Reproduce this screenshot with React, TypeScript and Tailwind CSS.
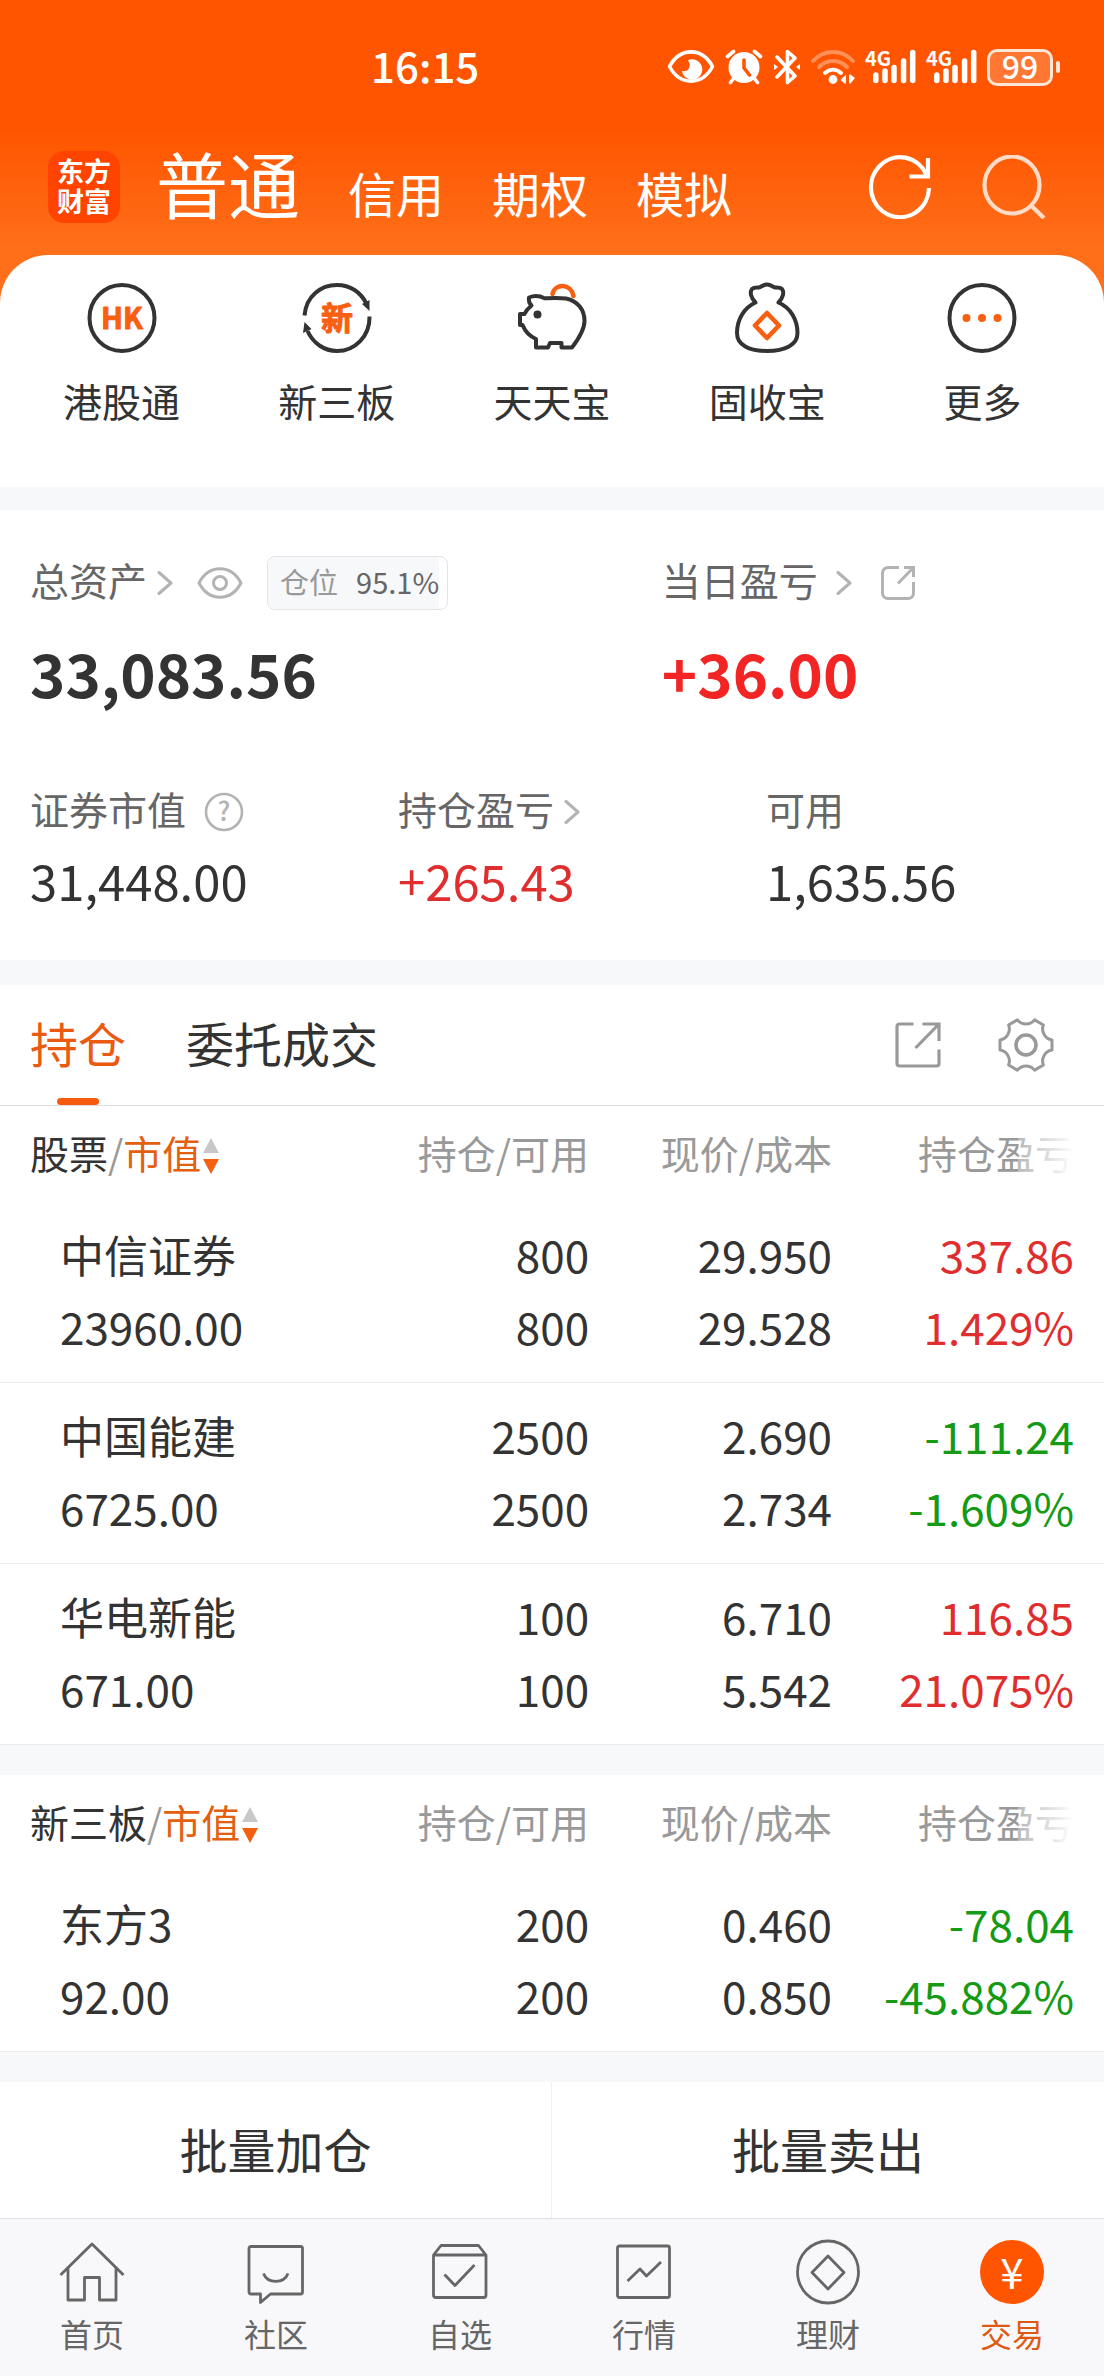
import type { ReactNode } from "react";

type Holding = {
  name: string;
  value: string;
  amount: string;
  available: string;
  price: string;
  cost: string;
  profit: string;
  rate: string;
};

const stocks: Holding[] = [
  { name: "中信证券", value: "23960.00", amount: "800", available: "800", price: "29.950", cost: "29.528", profit: "337.86", rate: "1.429%" },
  { name: "中国能建", value: "6725.00", amount: "2500", available: "2500", price: "2.690", cost: "2.734", profit: "-111.24", rate: "-1.609%" },
  { name: "华电新能", value: "671.00", amount: "100", available: "100", price: "6.710", cost: "5.542", profit: "116.85", rate: "21.075%" },
];

const thirdBoard: Holding[] = [
  { name: "东方3", value: "92.00", amount: "200", available: "200", price: "0.460", cost: "0.850", profit: "-78.04", rate: "-45.882%" },
];

/* 状态栏图标 */
function SignalIcon() {
  return (
    <svg className="h-9 w-[52px] overflow-visible" viewBox="0 0 52 36" fill="none" stroke="#fff" strokeWidth="5.5" strokeLinecap="round">
      <text x="0" y="17" fill="#fff" stroke="none" fontSize="20" fontWeight="700">4G</text>
      <path d="M10.8 26v5.5M20 22v9.5M29 18.500v13M38.600 12v19.500M47.700 3.500v28" />
    </svg>
  );
}

function StatusBar() {
  return (
    <div className="flex h-[134px] items-center justify-between pl-[371px] pr-11">
      <span className="pb-1 text-[42px] leading-[48px] font-medium">16:15</span>
      <div className="flex items-center gap-[9px]">
        <svg className="h-[34px] w-12" viewBox="0 0 48 34" fill="none" stroke="#fff" strokeWidth="3.600">
          <path d="M2.500 16.500C13-3 35-3 45.500 16.500 35 36 13 36 2.500 16.500Z" strokeLinejoin="round" />
          <path d="M21 10.200a10.200 10.200 0 1 1-6 10.500c2 1.200 5 .8 6.500-1.600 1.800-2.800 1.700-6-.5-8.900Z" fill="#fff" stroke="none" />
        </svg>
        <svg className="h-9 w-10" viewBox="0 0 40 36" fill="none" stroke="#fff" strokeWidth="3.600" strokeLinecap="round">
          <circle cx="20" cy="18.500" r="15.500" fill="#fff" stroke="none" />
          <path d="M3.500 7.500l6-5M30.500 2.500l6 5M9.500 29.500l-3 4M30.500 29.500l3 4" />
          <path d="M20 11v8l5.500 7" stroke="#ff5500" strokeLinejoin="round" />
        </svg>
        <svg className="h-9 w-7" viewBox="0 0 28 36" fill="none" stroke="#fff" strokeWidth="3.600" strokeLinecap="round" strokeLinejoin="round">
          <path d="M4 8l18 19-7.500 6.500V2.500L22 9 4 28" />
          <path d="M1 15v6l4-3ZM27 15v6l-4-3Z" fill="#fff" stroke="none" />
        </svg>
        <svg className="h-9 w-[46px]" viewBox="0 0 46 36" fill="none" stroke="#fff" strokeWidth="4" strokeLinecap="round">
          <path d="M3 12C14 0 32 0 43 12" opacity=".35" />
          <path d="M9 18c8-8 20-8 28 0" opacity=".35" />
          <path d="M15 24c5-4.500 11-4.500 16 0" />
          <circle cx="23" cy="30.500" r="4.400" fill="#fff" stroke="none" />
          <path d="M36 25.500v9h-1.500L30.500 31ZM39 25.500h1.500l4.500 3.500-4.500 5.500H39Z" fill="#fff" stroke="none" />
        </svg>
        <SignalIcon />
        <SignalIcon />
        <div className="flex items-center gap-[3px]">
          <span className="flex h-[37px] w-[66px] items-center justify-center rounded-[10px] border-[3px] border-[#ffe6d5] bg-white/20 pb-1 text-[32px] leading-8 font-medium">
            99
          </span>
          <span className="h-3 w-1 rounded-sm bg-[#ffe6d5]"></span>
        </div>
      </div>
    </div>
  );
}

function TopNav() {
  return (
    <div className="flex h-[106px] items-center pr-[58px] pl-12">
      <div className="flex h-[72px] w-[72px] items-center justify-center rounded-2xl bg-[#ff4400] pb-0.5 text-[27px] leading-[30px] font-bold">
        <p>
          东方
          <br />
          财富
        </p>
      </div>
      <nav className="ml-9 flex flex-1 items-baseline gap-12 text-5xl leading-[72px]">
        <a href="#normal" className="text-[72px] leading-[72px]">普通</a>
        <a href="#credit">信用</a>
        <a href="#option">期权</a>
        <a href="#demo">模拟</a>
      </nav>
      <button type="button" aria-label="刷新">
        <svg className="size-16" viewBox="0 0 64 64" fill="none" stroke="#fff" strokeWidth="4.200">
          <path d="M61 33A29 30 0 1 1 58.500 20" />
          <path d="M60 3v18.500H41.500" />
        </svg>
      </button>
      <button type="button" aria-label="搜索" className="ml-[50px]">
        <svg className="size-16" viewBox="0 0 64 64" fill="none" stroke="#ffdcc8" strokeWidth="4.200">
          <ellipse cx="30" cy="30" rx="27.500" ry="28.500" />
          <path d="M48.500 50L62 63" />
        </svg>
      </button>
    </div>
  );
}

function Shortcut({ label, children }: { label: string; children: ReactNode }) {
  return (
    <a href="#shortcut" className="flex flex-1 flex-col items-center gap-[22px]">
      <svg className="size-[72px]" viewBox="0 0 72 72" fill="none" stroke="#333" strokeWidth="4" strokeLinejoin="round">
        {children}
      </svg>
      <span className="text-[39px] leading-[48px]">{label}</span>
    </a>
  );
}

function Shortcuts() {
  return (
    <section className="flex rounded-t-[48px] bg-white px-3.5 pt-[27px] pb-[63px] text-[#333]">
      <Shortcut label="港股通">
        <ellipse cx="36" cy="36" rx="32.500" ry="33" />
        <text x="36" y="47" textAnchor="middle" fontSize="29" fontWeight="700" fill="#f95f10" stroke="#f95f10" strokeWidth="1">HK</text>
      </Shortcut>
      <Shortcut label="新三板">
        <path d="M3.500 33.500C5 14 20 3 36 3c13 0 24 7 29.500 19" />
        <path d="M68.500 34.500C69 54 54 69 36 69 23 69 12 61 6.500 49" />
        <path d="M61 22l7.500-4v11ZM10.500 47L2 51l1.500-11Z" fill="#333" stroke="none" />
        <text x="36" y="47.500" textAnchor="middle" fontSize="32" fontWeight="700" fill="#f95f10" stroke="#f95f10" strokeWidth="1">新</text>
      </Shortcut>
      <Shortcut label="天天宝">
        <path d="M36.500 12C39 1 55 1 57.500 14" stroke="#f95f10" strokeWidth="4.500" strokeLinecap="round" />
        <path d="M13 15.500c5-2 11-1.500 15.500.8C35 16 42 15.500 50 16.500 62 19 68.500 28 68.500 39c0 9-6 18-12.500 26.500H45.500V61H34l-2 4.500H20V57C13 54 9 49 6.500 43H4V32h4.500c1.500-3.500 4-6 7-8.500-2-2-3-5-2.500-8Z" />
        <circle cx="21.500" cy="32.500" r="4" fill="#333" stroke="none" />
      </Shortcut>
      <Shortcut label="固收宝">
        <path d="M24.500 20.500C20 16 18.500 10 21 7c2-2 5-1.500 7-1.500C30 5 32 2.500 36 2.500S42 5 44 5.500c2 0 5-.5 7 1.500 2.500 3 1 9-3.500 13.500C60 26 66.500 38 66.500 51 66.500 63 54 69 36 69S6 63 6 51c0-13 6.500-25 18.500-30.500Z" />
        <path d="M36 31L48 43.500 36 56 24 43.500Z" stroke="#f95f10" strokeWidth="4.600" />
      </Shortcut>
      <Shortcut label="更多">
        <ellipse cx="36" cy="36" rx="32.500" ry="33" />
        <g fill="#f95f10" stroke="none">
          <circle cx="20.500" cy="36" r="4" />
          <circle cx="36" cy="36" r="4" />
          <circle cx="51.500" cy="36" r="4" />
        </g>
      </Shortcut>
    </section>
  );
}

function Chevron() {
  return (
    <svg className="h-6 w-4" viewBox="0 0 16 24" fill="none" stroke="#b3b3b3" strokeWidth="3" strokeLinecap="round" strokeLinejoin="round">
      <path d="M2 1.500L14 12 2 22.500" />
    </svg>
  );
}

function Assets() {
  return (
    <section className="bg-white pt-[46px] pb-[50px]">
      <div className="grid grid-cols-[4fr_3fr]">
        <div className="pl-[30px]">
          <div className="flex h-[54px] items-center">
            <a href="#assets" className="flex items-center gap-2.5">
              <span className="pb-2 text-[39px] leading-[48px] text-[#666]">总资产</span>
              <Chevron />
            </a>
            <button type="button" aria-label="隐藏金额" className="mx-6">
              <svg className="h-8 w-[46px]" viewBox="0 0 46 32" fill="none" stroke="#b3b3b3" strokeWidth="3">
                <path d="M2 16C12-3 34-3 44 16 34 35 12 35 2 16Z" strokeLinejoin="round" />
                <circle cx="23" cy="16" r="6.500" />
              </svg>
            </button>
            <span className="rounded-lg border border-[#e3e4e8] pr-2">
              <span className="flex h-[52px] items-center gap-[18px] rounded-l-lg bg-[#f7f8fa] pl-3 pb-1 text-[29px] leading-9">
                <span className="text-[#999]">仓位</span>
                <span className="text-[#666]">95.1%</span>
              </span>
            </span>
          </div>
          <p className="mt-[26px] text-[60px] leading-[72px] font-bold text-[#333]">33,083.56</p>
        </div>
        <div className="pl-[31px]">
          <div className="flex h-[54px] items-center">
            <a href="#today" className="flex items-center gap-[18px]">
              <span className="pb-2 text-[39px] leading-[48px] text-[#666]">当日盈亏</span>
              <Chevron />
            </a>
            <button type="button" aria-label="分享" className="ml-7">
              <svg className="size-9" viewBox="0 0 36 36" fill="none" stroke="#b3b3b3" strokeWidth="3">
                <path d="M19 2.500H8A5.500 5.500 0 0 0 2.500 8v20A5.500 5.500 0 0 0 8 33.500h20a5.500 5.500 0 0 0 5.500-5.500V17" />
                <path d="M24 2.500h9.500V12M33 3L18 18.500" />
              </svg>
            </button>
          </div>
          <p className="mt-[26px] text-[60px] leading-[72px] font-bold text-[#f22424]">+36.00</p>
        </div>
      </div>

      <div className="mt-20 grid grid-cols-3 text-[49px] leading-[60px] text-[#333]">
        <div className="pl-[30px]">
          <div className="flex h-12 items-center gap-[18px]">
            <span className="pb-2 text-[39px] leading-[48px] text-[#666]">证券市值</span>
            <button type="button" aria-label="说明">
              <svg className="size-10" viewBox="0 0 40 40" fill="none" stroke="#b3b3b3" strokeWidth="2.600">
                <circle cx="20" cy="20" r="18" />
                <text x="20" y="29" textAnchor="middle" fontSize="26" fontWeight="500" fill="#b3b3b3" stroke="none">?</text>
              </svg>
            </button>
          </div>
          <p className="mt-3.5">31,448.00</p>
        </div>
        <div className="pl-[30px]">
          <a href="#profit" className="flex h-12 items-center gap-2.5">
            <span className="pb-2 text-[39px] leading-[48px] text-[#666]">持仓盈亏</span>
            <Chevron />
          </a>
          <p className="mt-3.5 text-[#e02d2d]">+265.43</p>
        </div>
        <div className="pl-[30px]">
          <div className="flex h-12 items-center">
            <span className="pb-2 text-[39px] leading-[48px] text-[#666]">可用</span>
          </div>
          <p className="mt-3.5">1,635.56</p>
        </div>
      </div>
    </section>
  );
}

function PositionTabs() {
  return (
    <div className="flex h-[121px] items-center border-b border-[#dedede] bg-white px-[30px] text-5xl">
      <a href="#position" className="relative flex h-full items-center pb-1.5 text-[#ea5a10]">
        持仓
        <span className="absolute bottom-0 left-1/2 h-[7px] w-[42px] -translate-x-1/2 rounded-full bg-[#f55a0f]"></span>
      </a>
      <a href="#orders" className="ml-[60px] flex-1 pb-1.5 text-[#333]">委托成交</a>
      <button type="button" aria-label="分享持仓">
        <svg className="size-12" viewBox="0 0 48 48" fill="none" stroke="#999" strokeWidth="3.200">
          <path d="M19.500 3H5.500A2.500 2.500 0 0 0 3 5.500v37A2.500 2.500 0 0 0 5.500 45h37a2.500 2.500 0 0 0 2.500-2.500V28.500" />
          <path d="M28.500 3H45v17M44.500 3.500l-23 23.500" />
        </svg>
      </button>
      <button type="button" aria-label="设置" className="ml-14 mr-5">
        <svg className="size-14" viewBox="0 0 56 56" fill="none" stroke="#999" strokeWidth="3" strokeLinejoin="round">
          <path d="M54 33.100A11 11 0 0 0 45.400 48L36.600 53.100A11 11 0 0 0 19.400 53.100L10.600 48A11 11 0 0 0 2 33.100V22.900A11 11 0 0 0 10.600 8L19.400 2.900A11 11 0 0 0 36.600 2.900L45.400 8A11 11 0 0 0 54 22.900Z" />
          <circle cx="28" cy="28" r="10" strokeWidth="3.500" />
        </svg>
      </button>
    </div>
  );
}

function HoldingRow({ item }: { item: Holding }) {
  const color = item.profit.startsWith("-") ? "text-[#149a14]" : "text-[#e02d2d]";
  return (
    <tr className="border-b border-[#ebebeb] text-right">
      <td className="pt-4 pb-5 pl-[60px] text-left">
        <div>{item.name}</div>
        <div>{item.value}</div>
      </td>
      <td className="pt-4 pb-5">
        <div>{item.amount}</div>
        <div>{item.available}</div>
      </td>
      <td className="pt-4 pb-5">
        <div>{item.price}</div>
        <div>{item.cost}</div>
      </td>
      <td className={`pt-4 pb-5 pr-[30px] ${color}`}>
        <div>{item.profit}</div>
        <div>{item.rate}</div>
      </td>
    </tr>
  );
}

function HoldingTable({ title, items }: { title: string; items: Holding[] }) {
  return (
    <table className="w-full table-fixed bg-white text-[44px] leading-[72px] text-[#333]">
      <thead>
        <tr className="h-24 text-right text-[39px] leading-[48px] text-[#999]">
          <th className="pb-1 pl-[30px] text-left font-normal">
            <button type="button" className="flex items-center">
              <span className="text-[#333]">{title}</span>/<span className="text-[#e2600f]">市值</span>
              <svg className="mt-2 ml-0.5 h-9 w-4" viewBox="0 0 16 36">
                <path d="M8 0l8 15H0Z" fill="#c8c8c8" />
                <path d="M8 36l8-15H0Z" fill="#f55f12" />
              </svg>
            </button>
          </th>
          <th className="w-[22%] pb-1 font-normal">持仓/可用</th>
          <th className="w-[22%] pb-1 font-normal">现价/成本</th>
          <th className="relative w-[272px] pr-[30px] pb-1 font-normal">
            持仓盈亏
            <span className="absolute inset-y-0 right-[30px] w-14 bg-linear-to-r from-white/30 to-white"></span>
          </th>
        </tr>
      </thead>
      <tbody>
        {items.map((item) => (
          <HoldingRow key={item.name} item={item} />
        ))}
      </tbody>
    </table>
  );
}

function NavItem({ label, active, children }: { label: string; active?: boolean; children: ReactNode }) {
  return (
    <a
      href="#nav"
      className={`flex flex-1 flex-col items-center gap-2.5 text-[32px] leading-9 ${active ? "text-[#dd5a14]" : "text-[#666]"}`}
    >
      <svg className="size-[66px]" viewBox="0 0 66 66" fill="none" stroke="#666" strokeWidth="2.800" strokeLinejoin="round">
        {children}
      </svg>
      <span>{label}</span>
    </a>
  );
}

function BottomNav() {
  return (
    <nav className="flex border-t border-[#e0e0e2] bg-[#f8f8fa] pt-5 pb-5">
      <NavItem label="首页">
        <path d="M1.500 36L33 5l31.500 31" />
        <path d="M9 29v32h16.500V38.500h15V61H57V29" />
      </NavItem>
      <NavItem label="社区">
        <path d="M8 7.500h49.500a2 2 0 0 1 2 2V53a2 2 0 0 1-2 2H27.500l-10 8.500V55H8a2 2 0 0 1-2-2V9.500a2 2 0 0 1 2-2Z" />
        <path d="M20.500 34.500c4 10.500 20.500 10.500 24.500 0" />
      </NavItem>
      <NavItem label="自选">
        <path d="M6.500 16L14 6.500h37.500L59 16v40a2.500 2.500 0 0 1-2.500 2.500H9A2.500 2.500 0 0 1 6.500 56ZM6.500 16H59" />
        <path d="M17.500 35.500l10.500 11 19.500-20.500" />
      </NavItem>
      <NavItem label="行情">
        <rect x="6.500" y="7" width="52" height="51.500" rx="2" />
        <path d="M16.500 42l12.500-12 6.500 7L50 23" />
      </NavItem>
      <NavItem label="理财">
        <ellipse cx="33" cy="33" rx="30.500" ry="31" />
        <path d="M33 17l16 16.500L33 50 17 33.500Z" />
      </NavItem>
      <NavItem label="交易" active>
        <circle cx="33" cy="33" r="32" fill="#ff5500" stroke="none" />
        <text x="33" y="50" textAnchor="middle" fontSize="42" fill="#fff" stroke="none">¥</text>
      </NavItem>
    </nav>
  );
}

export default function App() {
  return (
    <div className="min-h-screen bg-[#f8f8fa] font-['Noto_Sans_CJK_SC',sans-serif]">
      {/* 顶部 */}
      <header className="bg-[linear-gradient(#ff5500_130px,#ff6f1a_250px)] text-white">
        <StatusBar />
        <div className="pb-[15px]">
          <TopNav />
        </div>
        <Shortcuts />
      </header>

      <main className="bg-[#f7f8fa] pt-[23px]">
        {/* 资产 */}
        <Assets />

        {/* 持仓 */}
        <div className="mt-[25px]">
          <PositionTabs />
          <HoldingTable title="股票" items={stocks} />
        </div>
        <div className="mt-[30px]">
          <HoldingTable title="新三板" items={thirdBoard} />
        </div>

        {/* 批量操作 */}
        <div className="mt-[30px] grid grid-cols-2 bg-white text-5xl leading-[60px] text-[#333]">
          <button type="button" className="border-r border-[#f0f0f2] pt-9 pb-10">批量加仓</button>
          <button type="button" className="pt-9 pb-10">批量卖出</button>
        </div>
      </main>

      <BottomNav />
    </div>
  );
}
